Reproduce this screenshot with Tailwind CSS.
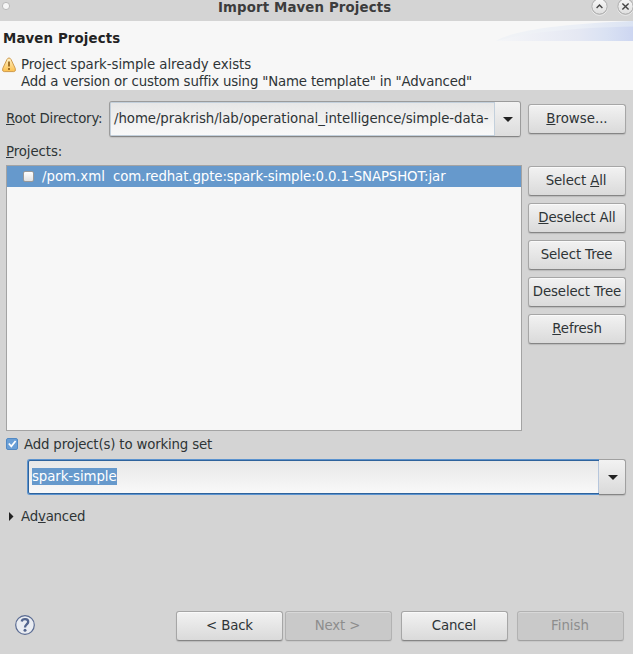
<!DOCTYPE html>
<html lang="en">
<head>
<meta charset="utf-8">
<title>Import Maven Projects</title>
<script src="https://cdn.jsdelivr.net/npm/@tailwindcss/browser@4"></script>
</head>
<body class="bg-[#d4d4d4]">
<div class="w-[633px] h-[654px] overflow-hidden flex flex-col bg-[#d4d4d4] text-[#2e3436] font-['DejaVu_Sans',sans-serif] text-[13.33px] leading-4 whitespace-nowrap">
  <!-- Title bar -->
  <header class="relative h-[21px] shrink-0">
    <svg class="absolute left-0 top-0" width="14" height="14"><circle cx="6" cy="6" r="3.6" fill="#f6f6f6" stroke="#b9b9b9"/></svg>
    <h1 class="absolute left-[218px] top-0 font-bold text-[#3c3c3c] tracking-[0.13px]">Import Maven Projects</h1>
    <svg class="absolute right-0 top-0" width="46" height="18" fill="none">
      <defs><linearGradient id="wb" x1="0" y1="0" x2="0" y2="1"><stop offset="0" stop-color="#f8f8f8"/><stop offset="1" stop-color="#dedede"/></linearGradient></defs>
      <circle cx="12.5" cy="7.3" r="8" stroke="#ededed"/><circle cx="38.5" cy="7.3" r="8" stroke="#ededed"/>
      <circle cx="12.5" cy="6.5" r="7.7" fill="url(#wb)" stroke="#a6a6a6"/>
      <circle cx="38.5" cy="6.5" r="7.7" fill="url(#wb)" stroke="#a6a6a6"/>
      <path d="M9.6 8L12.5 5.1L15.4 8" stroke="#444" stroke-width="1.4"/>
      <path d="M35.4 3.4L41.6 9.6M41.6 3.4L35.4 9.6" stroke="#444" stroke-width="1.4"/>
    </svg>
  </header>

  <!-- Wizard banner -->
  <section class="relative h-[69px] shrink-0 bg-[#f7f7f7] pl-[3px] pt-[10px]">
    <svg class="absolute right-0 top-0" width="137" height="20">
      <defs><linearGradient id="sw"><stop offset="0" stop-color="#f5f6f8"/><stop offset=".6" stop-color="#e5e8f3"/><stop offset=".8" stop-color="#dae2f3"/><stop offset="1" stop-color="#cdd6f1"/></linearGradient>
      <linearGradient id="sl"><stop offset="0" stop-color="#f1f3f6"/><stop offset=".6" stop-color="#ebeff6"/><stop offset="1" stop-color="#dbe3f3"/></linearGradient></defs>
      <path d="M0 20C18 9 65 3 137 0V20Z" fill="url(#sl)"/>
      <path d="M0 20C26 13 65 7 137 5.5V20Z" fill="url(#sw)"/>
    </svg>
    <h2 class="font-bold text-[#232323] tracking-[0.13px]">Maven Projects</h2>
    <div class="flex pt-[9px]">
      <svg class="-ml-[2px] mr-[4px]" width="16" height="17">
        <defs><linearGradient id="wa" x1="0" y1="0" x2="0" y2="1"><stop offset="0" stop-color="#fff3c9"/><stop offset="1" stop-color="#fcc04d"/></linearGradient></defs>
        <path d="M8 2Q9.3 2 10 3.4L14.2 12.3Q15.2 15.6 12.8 15.6H3.2Q.8 15.6 1.8 12.3L6 3.4Q6.7 2 8 2Z" fill="url(#wa)" stroke="#cf9a4c"/>
        <path d="M8 5.6V10.6M8 12V14" stroke="#8d5a12" stroke-width="1.6"/>
      </svg>
      <div class="leading-[17px]">
        <p class="tracking-[-0.065px]">Project spark-simple already exists</p>
        <p class="tracking-[-0.17px]">Add a version or custom suffix using "Name template" in "Advanced"</p>
      </div>
    </div>
  </section>

  <main class="flex flex-col grow">
    <!-- Root directory -->
    <div class="flex h-[57px] pl-[6px] pt-[11px] shrink-0">
      <label class="w-[103px] pt-[10px] tracking-[-0.2px]"><u class="underline-offset-1">R</u>oot Directory:</label>
      <div class="flex w-[412px] h-[36px] rounded-[3px] border border-[#9b9b9b] border-b-[#858585] overflow-hidden shadow-[0_1px_1px_#00000018]">
        <div class="w-[385px] shrink-0 border-y border-l border-r border-[#c3d0dc] bg-linear-to-b from-[#e7e7e7] to-[#f9f9f9] pl-[3px] pr-[4px] pt-[8px] tracking-[-0.07px]">/home/prakrish/lab/operational_intelligence/simple-data-</div>
        <div class="grow bg-linear-to-b from-[#f2f2f2] to-[#dddddd] flex items-center justify-center"><svg width="10" height="5"><path d="M0 0H10L5 5Z" fill="#222"/></svg></div>
      </div>
      <button class="ml-[7px] mt-[3px] w-[98px] h-[30px] pb-px rounded-[3px] border border-[#a6a6a6] border-b-[#858585] bg-linear-to-b from-[#f2f2f2] to-[#dadada] shadow-[0_1px_1px_#00000020,inset_0_1px_0_#fafafa]"><u class="underline-offset-1">B</u>rowse...</button>
    </div>
    <p class="h-[17px] pl-[6px] -mt-[3px] shrink-0 tracking-[-0.1px]"><u class="underline-offset-1">P</u>rojects:</p>

    <!-- Project list and selection actions -->
    <div class="flex pl-[6px] mt-[4px] shrink-0">
      <div class="w-[516px] h-[266px] border border-[#a3a3a3] bg-[#f7f7f7]">
        <div class="flex items-center h-[21px] bg-[#6699cc] text-white pl-[16px]">
          <span class="size-[11px] rounded-[2px] border border-[#999] bg-linear-to-b from-white to-[#e2e2e2] mr-[8px]"></span>
          <span>/pom.xml</span><span class="ml-[8px] tracking-[-0.1px]">com.redhat.gpte:spark-simple:0.0.1-SNAPSHOT:jar</span>
        </div>
      </div>
      <div class="ml-[6px] mt-[1px] flex flex-col gap-[7px] tracking-[-0.13px]">
        <button class="w-[98px] h-[30px] pb-px pr-[2px] rounded-[3px] border border-[#a6a6a6] border-b-[#858585] bg-linear-to-b from-[#f2f2f2] to-[#dadada] shadow-[0_1px_1px_#00000020,inset_0_1px_0_#fafafa]">Select <u class="underline-offset-1">A</u>ll</button>
        <button class="w-[98px] h-[30px] pb-px rounded-[3px] border border-[#a6a6a6] border-b-[#858585] bg-linear-to-b from-[#f2f2f2] to-[#dadada] shadow-[0_1px_1px_#00000020,inset_0_1px_0_#fafafa]"><u class="underline-offset-1">D</u>eselect All</button>
        <button class="w-[98px] h-[30px] pb-px pr-px rounded-[3px] border border-[#a6a6a6] border-b-[#858585] bg-linear-to-b from-[#f2f2f2] to-[#dadada] shadow-[0_1px_1px_#00000020,inset_0_1px_0_#fafafa]">Select Tree</button>
        <button class="w-[98px] h-[30px] pb-px rounded-[3px] border border-[#a6a6a6] border-b-[#858585] bg-linear-to-b from-[#f2f2f2] to-[#dadada] shadow-[0_1px_1px_#00000020,inset_0_1px_0_#fafafa]">Deselect Tree</button>
        <button class="w-[98px] h-[30px] pb-px rounded-[3px] border border-[#a6a6a6] border-b-[#858585] bg-linear-to-b from-[#f2f2f2] to-[#dadada] shadow-[0_1px_1px_#00000020,inset_0_1px_0_#fafafa]"><u class="underline-offset-1">R</u>efresh</button>
      </div>
    </div>

    <!-- Working set -->
    <div class="flex pl-[6px] pt-[6px] h-[28px] shrink-0">
      <svg class="mt-[1px] mr-[6px]" width="12" height="12"><rect x=".5" y=".5" width="11" height="11" rx="1.5" fill="#6a9fd6" stroke="#5289c4"/><path d="M2.8 5.5L5.3 8.4L9.6 3" fill="none" stroke="#fff" stroke-width="1.7"/></svg>
      <span class="tracking-[-0.17px]">Add project(s) to working set</span>
    </div>
    <div class="flex ml-[27px] w-[599px] h-[36px] shrink-0">
      <div class="w-[572px] rounded-l-[3px] border border-r-0 border-[#5b93cf] shadow-[inset_0_1px_0_#2f639c,inset_0_-1px_0_#2f639c,inset_1px_0_0_#2f639c,inset_-1px_0_0_#b9c9df] bg-linear-to-b from-[#e7e7e7] to-[#f9f9f9] pl-[4px] pt-[8px]"><span class="inline-block h-[17px] leading-[17px] bg-[#6699cc] text-white tracking-[-0.08px]">spark-simple</span></div>
      <div class="grow rounded-r-[3px] border border-l-0 border-[#a0a0a0] border-b-[#858585] bg-linear-to-b from-[#f2f2f2] to-[#dadada] flex items-center justify-center pl-px shadow-[0_1px_1px_#00000020]"><svg width="10" height="5"><path d="M0 0H10L5 5Z" fill="#222"/></svg></div>
    </div>
    <div class="flex pl-[8px] pt-[14px] shrink-0">
      <svg class="mt-[3px] mr-[7px]" width="6" height="9"><path d="M1 0L5.5 4.5L1 9Z" fill="#222"/></svg>
      <span class="tracking-[-0.2px]">Ad<u class="underline-offset-1">v</u>anced</span>
    </div>
  </main>

  <!-- Wizard navigation -->
  <footer class="flex h-[43px] shrink-0 pl-[15px]">
    <svg class="mt-[4px]" width="20" height="20"><circle cx="10" cy="10" r="9.3" fill="#e9ecf2" stroke="#5a6b92" stroke-width="1.2"/><path d="M6.7 6.4C7.4 3.2 13.3 3.3 13.2 6.9C13.1 9.5 10 9.4 10 12.5" fill="none" stroke="#53658e" stroke-width="2.3"/><circle cx="10" cy="15.3" r="1.5" fill="#53658e"/></svg>
    <button class="ml-[141px] w-[107px] h-[30px] pb-px rounded-[3px] border border-[#a6a6a6] border-b-[#858585] bg-linear-to-b from-[#f2f2f2] to-[#dadada] shadow-[0_1px_1px_#00000020,inset_0_1px_0_#fafafa] tracking-[-0.15px]">&lt; Back</button>
    <button disabled class="ml-[2px] w-[107px] h-[30px] pb-px pr-[2px] rounded-[3px] border border-[#b2b2b2] border-b-[#a0a0a0] bg-[#c9c9c9] text-[#8d8d8d] shadow-[0_1px_1px_#00000010,inset_0_1px_0_#d8d8d8] tracking-[-0.15px]">Next &gt;</button>
    <button class="ml-[9px] w-[107px] h-[30px] pb-px pr-px rounded-[3px] border border-[#a6a6a6] border-b-[#858585] bg-linear-to-b from-[#f2f2f2] to-[#dadada] shadow-[0_1px_1px_#00000020,inset_0_1px_0_#fafafa] tracking-[-0.15px]">Cancel</button>
    <button disabled class="ml-[9px] w-[107px] h-[30px] pb-px pr-px rounded-[3px] border border-[#b2b2b2] border-b-[#a0a0a0] bg-[#c9c9c9] text-[#8d8d8d] shadow-[0_1px_1px_#00000010,inset_0_1px_0_#d8d8d8]">Finish</button>
  </footer>
</div>
</body>
</html>
